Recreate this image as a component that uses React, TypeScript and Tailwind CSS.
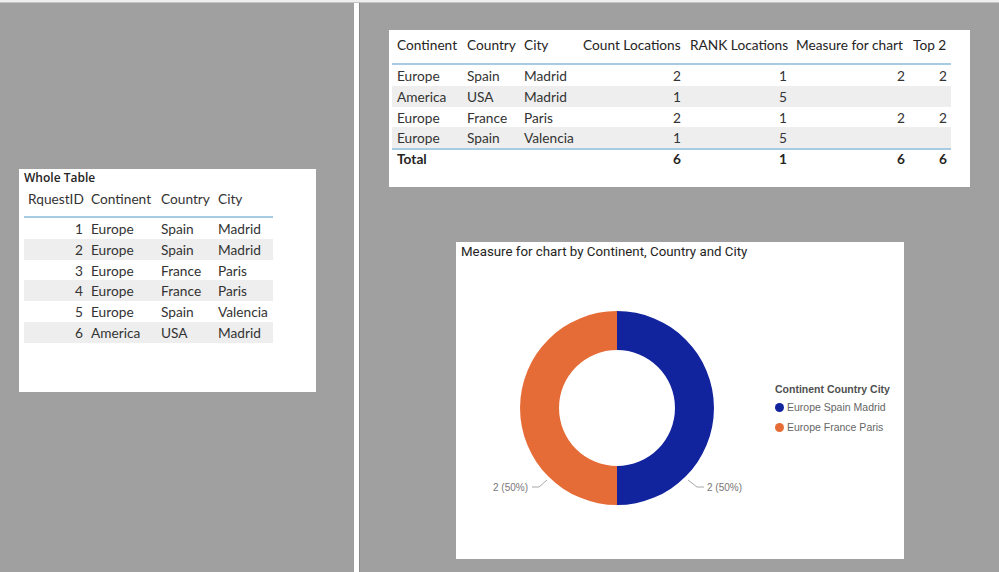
import React from "react";

const leftRows = [
  ["1", "Europe", "Spain", "Madrid"],
  ["2", "Europe", "Spain", "Madrid"],
  ["3", "Europe", "France", "Paris"],
  ["4", "Europe", "France", "Paris"],
  ["5", "Europe", "Spain", "Valencia"],
  ["6", "America", "USA", "Madrid"],
];

const rightRows = [
  ["Europe", "Spain", "Madrid", "2", "1", "2", "2"],
  ["America", "USA", "Madrid", "1", "5", "", ""],
  ["Europe", "France", "Paris", "2", "1", "2", "2"],
  ["Europe", "Spain", "Valencia", "1", "5", "", ""],
];

function WholeTable() {
  return (
    <div className="w-[297px] h-[223px] bg-white pl-[5px]">
      <div className="h-[16px] pt-[1px] text-[12px] leading-[15px] font-semibold text-[#252423] font-['Open_Sans',sans-serif]">
        Whole Table
      </div>
      <div className="w-[249px] text-[13.7px] text-[#333]">
        <div className="grid grid-cols-[63px_70px_57px_59px] pt-[4px] pb-[7px] leading-[20px] border-b-2 border-[#a6cbe3]">
          <div className="pl-[4px]">RquestID</div>
          <div className="pl-[4px]">Continent</div>
          <div className="pl-[4px]">Country</div>
          <div className="pl-[4px]">City</div>
        </div>
        {leftRows.map((r, i) => (
          <div
            key={i}
            className={`grid grid-cols-[63px_70px_57px_59px] h-[20.75px] leading-[21.5px] ${
              i % 2 === 1 ? "bg-[#eeeeee]" : "bg-white"
            }`}
          >
            <div className="text-right pr-[4px]">{r[0]}</div>
            <div className="pl-[4px]">{r[1]}</div>
            <div className="pl-[4px]">{r[2]}</div>
            <div className="pl-[4px]">{r[3]}</div>
          </div>
        ))}
      </div>
    </div>
  );
}

function LocationsTable() {
  const cols = "grid grid-cols-[71px_57px_59px_106px_106px_118px_42px]";
  return (
    <div className="w-[581px] h-[157px] bg-white pl-[3px]">
      <div className="w-[559px] text-[13.7px] text-[#333]">
        <div className={`${cols} pt-[5px] pb-[8px] leading-[20px] border-b-2 border-[#a6cbe3] text-[#252423]`}>
          <div className="pl-[5px]">Continent</div>
          <div className="pl-[4px]">Country</div>
          <div className="pl-[4px]">City</div>
          <div className="pl-[4px] whitespace-nowrap">Count Locations</div>
          <div className="pl-[5px] whitespace-nowrap">RANK Locations</div>
          <div className="pl-[5px] whitespace-nowrap">Measure for chart</div>
          <div className="pl-[4px] whitespace-nowrap">Top 2</div>
        </div>
        {rightRows.map((r, i) => (
          <div
            key={i}
            className={`${cols} h-[20.75px] leading-[21.5px] ${i % 2 === 1 ? "bg-[#eeeeee]" : "bg-white"}`}
          >
            <div className="pl-[5px]">{r[0]}</div>
            <div className="pl-[4px]">{r[1]}</div>
            <div className="pl-[4px]">{r[2]}</div>
            <div className="text-right pr-[4px]">{r[3]}</div>
            <div className="text-right pr-[4px]">{r[4]}</div>
            <div className="text-right pr-[4px]">{r[5]}</div>
            <div className="text-right pr-[4px]">{r[6]}</div>
          </div>
        ))}
        <div className={`${cols} border-t-2 border-[#a6cbe3] leading-[17px] font-bold text-[#252423]`}>
          <div className="pl-[5px]">Total</div>
          <div />
          <div />
          <div className="text-right pr-[4px]">6</div>
          <div className="text-right pr-[4px]">1</div>
          <div className="text-right pr-[4px]">6</div>
          <div className="text-right pr-[4px]">6</div>
        </div>
      </div>
    </div>
  );
}

function DonutChart() {
  return (
    <div className="w-[448px] h-[317px] bg-white">
      <div className="h-[22px] pl-[5px] pt-[2px] text-[13.3px] leading-[16px] text-[#252423] font-['Roboto',sans-serif]">
        Measure for chart by Continent, Country and City
      </div>
      <div className="flex items-start">
        <svg width="316" height="295" viewBox="0 0 316 295">
          <path d="M161 47 A97 97 0 0 1 161 241 L161 202 A58 58 0 0 0 161 86 Z" fill="#12239e" />
          <path d="M161 241 A97 97 0 0 1 161 47 L161 86 A58 58 0 0 0 161 202 Z" fill="#e66c37" />
          <polyline points="232,216 241,223 248,223" fill="none" stroke="#a8a8a8" strokeWidth="1" />
          <polyline points="91,216 83,223 76,223" fill="none" stroke="#a8a8a8" strokeWidth="1" />
          <text x="251" y="227" fontSize="10" fill="#777" fontFamily="'Segoe UI','Liberation Sans',sans-serif">
            2 (50%)
          </text>
          <text x="72" y="227" fontSize="10" fill="#777" textAnchor="end" fontFamily="'Segoe UI','Liberation Sans',sans-serif">
            2 (50%)
          </text>
        </svg>
        <div className="mt-[118px] ml-[3px] text-[10.5px] leading-[14px] font-['Liberation_Sans',sans-serif]">
          <div className="font-bold text-[#505050]">Continent Country City</div>
          <div className="flex items-center mt-[4px] text-[#666]">
            <span className="w-[9px] h-[9px] rounded-full bg-[#12239e] mr-[3px]" />
            Europe Spain Madrid
          </div>
          <div className="flex items-center mt-[6px] text-[#666]">
            <span className="w-[9px] h-[9px] rounded-full bg-[#e66c37] mr-[3px]" />
            Europe France Paris
          </div>
        </div>
      </div>
    </div>
  );
}

export default function App() {
  return (
    <div className="w-[999px] h-[572px] overflow-hidden bg-[#a0a0a0] flex flex-col font-['Segoe_UI','Lato',sans-serif]">
      {/* top ribbon remnant */}
      <div className="h-[3px] bg-[#eeeeee] border-b border-[#c4c4c4]" />
      <div className="flex flex-1">
        {/* left page */}
        <div className="w-[354px] pl-[19px] pt-[166px]">
          <WholeTable />
        </div>
        <div className="w-[5px] bg-white" />
        <div className="w-[1px] bg-[#8c8c8c]" />
        {/* right page */}
        <div className="flex-1 flex flex-col pl-[29px] pt-[27px]">
          <LocationsTable />
          <div className="ml-[67px] mt-[55px]">
            <DonutChart />
          </div>
        </div>
      </div>
    </div>
  );
}
